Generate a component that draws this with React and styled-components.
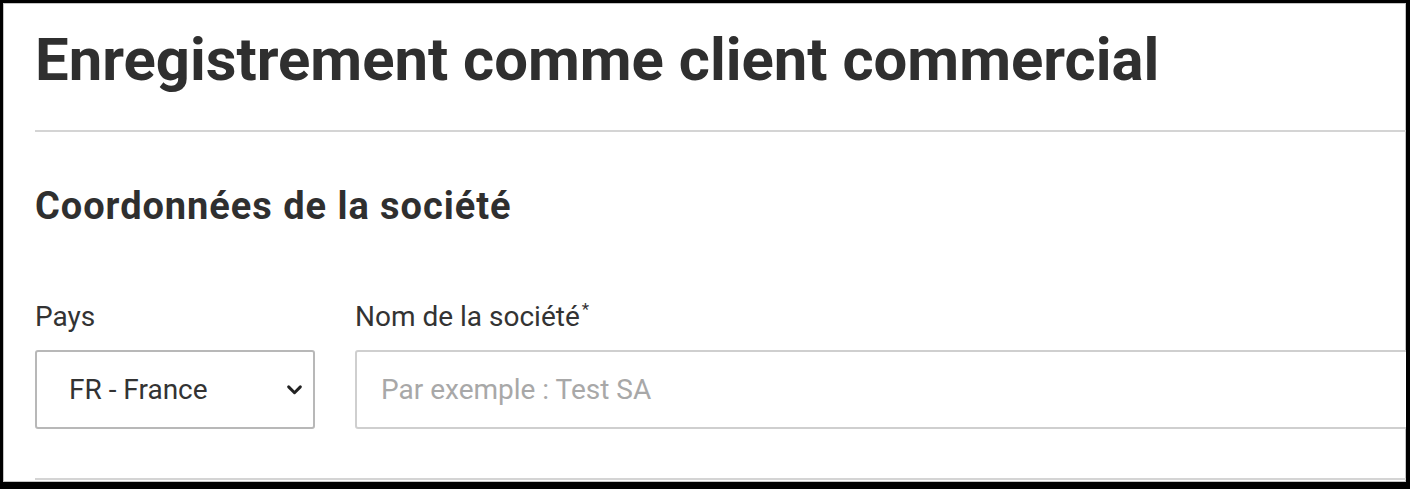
import React from "react";
import styled, { createGlobalStyle } from "styled-components";

const Global = createGlobalStyle`
  html, body { margin: 0; padding: 0; background: #000; }
  * { box-sizing: border-box; }
`;

const Frame = styled.div`
  width: 1410px;
  height: 489px;
  background: #000;
  padding: 3px 4px 7px 3px;
`;

const Page = styled.div`
  width: 100%;
  height: 100%;
  background: #fff;
  box-shadow: inset 0 0 0 1px #c4c4c4;
  overflow: hidden;
  padding: 27px 0 0 32px;
  font-family: Roboto, "Liberation Sans", Arial, sans-serif;
  color: #333;
`;

const Title = styled.h1`
  margin: 0;
  font-size: 59.8px;
  line-height: 60px;
  font-weight: 700;
  color: #2f2f2f;
  white-space: nowrap;
`;

const Divider = styled.hr`
  margin: ${(p) => p.$top}px 0 0 0;
  border: 0;
  height: 2px;
  background: #d4d4d4;
`;

const SectionTitle = styled.h2`
  margin: 55px 0 0 0;
  font-size: 38px;
  line-height: 38px;
  letter-spacing: 0.95px;
  font-weight: 700;
  color: #2f2f2f;
  white-space: nowrap;
`;

const Row = styled.div`
  display: flex;
  gap: 40px;
  margin-top: 78px;
`;

const Field = styled.div`
  display: flex;
  flex-direction: column;
  gap: 19px;
  flex: ${(p) => (p.$grow ? "0 0 1100px" : "0 0 280px")};
`;

const Label = styled.label`
  font-size: 28px;
  line-height: 28px;
  color: #333;
  white-space: nowrap;
`;

const Req = styled.sup`
  font-size: 17px;
  line-height: 0;
  position: relative;
  top: -1px;
  margin-left: 2px;
`;

const SelectWrap = styled.div`
  position: relative;
  height: 79px;
`;

const Select = styled.select`
  appearance: none;
  -webkit-appearance: none;
  width: 100%;
  height: 100%;
  border: 2px solid #b8b8b8;
  border-radius: 3px;
  background: #fff;
  padding: 0 0 0 32px;
  font-family: inherit;
  font-size: 28px;
  color: #333;
  outline: none;
`;

const Chevron = styled.svg`
  position: absolute;
  right: 12px;
  top: 31px;
  width: 17px;
  height: 17px;
  pointer-events: none;
`;

const Input = styled.input`
  height: 79px;
  width: 100%;
  border: 2px solid #cfcfcf;
  border-radius: 3px;
  padding: 0 0 0 24px;
  font-family: inherit;
  font-size: 28px;
  color: #333;
  outline: none;
  &::placeholder {
    color: #a8a8a8;
  }
`;

export default function App() {
  return (
    <>
      <Global />
      <Frame>
        <Page>
          <Title>Enregistrement comme client commercial</Title>
          <Divider $top={40} />
          <SectionTitle>Coordonnées de la société</SectionTitle>
          <Row>
            <Field>
              <Label>Pays</Label>
              <SelectWrap>
                <Select defaultValue="FR">
                  <option value="FR">FR - France</option>
                </Select>
                <Chevron viewBox="0 0 16 16">
                  <path
                    d="M2.5 5.5 L8 11 L13.5 5.5"
                    fill="none"
                    stroke="#222"
                    strokeWidth="2.8"
                    strokeLinecap="round"
                    strokeLinejoin="round"
                  />
                </Chevron>
              </SelectWrap>
            </Field>
            <Field $grow>
              <Label>
                Nom de la société<Req>*</Req>
              </Label>
              <Input placeholder="Par exemple : Test SA" />
            </Field>
          </Row>
          <Divider $top={49} />
        </Page>
      </Frame>
    </>
  );
}
